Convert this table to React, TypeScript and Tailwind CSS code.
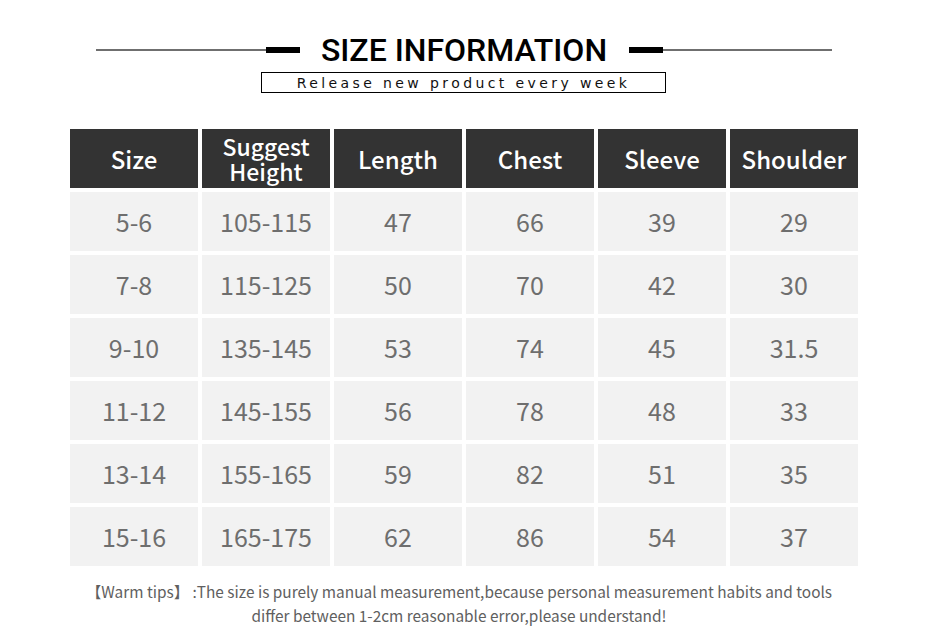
const headers = ["Size", "Suggest\nHeight", "Length", "Chest", "Sleeve", "Shoulder"]

const rows = [
  ["5-6", "105-115", "47", "66", "39", "29"],
  ["7-8", "115-125", "50", "70", "42", "30"],
  ["9-10", "135-145", "53", "74", "45", "31.5"],
  ["11-12", "145-155", "56", "78", "48", "33"],
  ["13-14", "155-165", "59", "82", "51", "35"],
  ["15-16", "165-175", "62", "86", "54", "37"],
]

function Title() {
  return (
    <div className="flex flex-col items-center">
      <div className="mt-[35px] h-[30px] flex items-center">
        <div className="w-[170px] h-[2.5px] bg-[#6f6f6f]" />
        <div className="w-[34px] h-[6px] bg-black" />
        <h1 className="mx-[19px] w-[291px] text-center text-[32px] leading-[30px] font-medium text-black [font-family:Roboto,'Liberation_Sans',sans-serif]">
          SIZE INFORMATION
        </h1>
        <div className="w-[34px] h-[6px] bg-black" />
        <div className="w-[169px] h-[2.5px] bg-[#6f6f6f]" />
      </div>
      <div className="mt-[7px] w-[405px] h-[21px] border border-black flex items-center justify-center">
        <span className="text-[14px] leading-none tracking-[3.4px] text-[#111] [font-family:'DejaVu_Sans',sans-serif]">
          Release new product every week
        </span>
      </div>
    </div>
  )
}

export default function App() {
  return (
    <div className="w-[930px] h-[639px] bg-white flex flex-col items-center [font-family:'Noto_Sans_CJK_SC','Noto_Sans',sans-serif]">
      <div className="-ml-[3px]">
        <Title />
      </div>

      <div className="mt-[36px] -ml-[2px] grid grid-cols-[repeat(6,128px)] gap-x-[4px] gap-y-[4px]">
        {headers.map((h) => (
          <div key={h} className="h-[59px] bg-[#333333] text-white flex items-center justify-center text-center">
            {h.includes("\n") ? (
              <span className="text-[23px] leading-[25px] font-medium whitespace-pre-line">{h}</span>
            ) : (
              <span className="text-[24px] leading-none font-medium">{h}</span>
            )}
          </div>
        ))}
        {rows.map((r) =>
          r.map((c, i) => (
            <div key={r[0] + i} className="h-[59px] bg-[#f2f2f2] text-[#6e6e6e] text-[25px] flex items-center justify-center">
              {c}
            </div>
          ))
        )}
      </div>

      <p className="mt-[13px] -ml-[12px] text-center text-[15.4px] leading-[24px] text-[#606060]">
        【Warm tips】 :The size is purely manual measurement,because personal measurement habits and tools
        <br />
        differ between 1-2cm reasonable error,please understand!
      </p>
    </div>
  )
}
